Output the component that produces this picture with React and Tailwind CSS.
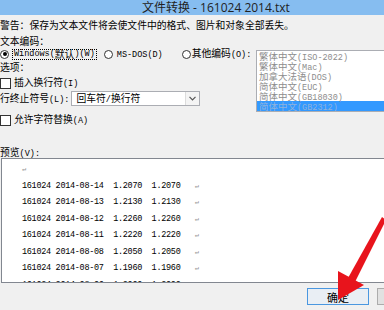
function A({ children }) {
  return <span className="font-['Liberation_Mono',monospace] text-[8.5px]">{children}</span>;
}

function Radio({ on }) {
  return (
    <span className="flex h-[9px] w-[9px] shrink-0 items-center justify-center rounded-full border border-[#333] bg-white">
      {on && <span className="h-[4px] w-[4px] rounded-full bg-black" />}
    </span>
  );
}

function Check() {
  return <span className="h-[11px] w-[11px] shrink-0 border border-[#333] bg-white" />;
}

const encodings = [
  ["繁体中文", "(ISO-2022)"],
  ["繁体中文", "(Mac)"],
  ["加拿大法语", "(DOS)"],
  ["简体中文", "(EUC)"],
  ["简体中文", "(GB18030)"],
  ["简体中文", "(GB2312)"],
];

const rows = [
  ["08-14", "1.2070"],
  ["08-13", "1.2130"],
  ["08-12", "1.2260"],
  ["08-11", "1.2220"],
  ["08-08", "1.2050"],
  ["08-07", "1.1960"],
  ["08-06", "1.2000"],
];

export default function App() {
  return (
    <div className="relative h-[310px] w-[384px] overflow-hidden bg-[#f0f0f0] font-['Noto_Sans_CJK_SC',sans-serif] text-[9.8px] leading-[12px] text-black">
      <div className="flex h-[15px] items-center whitespace-nowrap bg-[#86bdf0] pl-[142px] font-['Open_Sans','Noto_Sans_CJK_SC',sans-serif] text-[12px] text-[#222]">
        文件转换 - 161024 2014.txt
      </div>

      <div className="mt-[4px] h-[12px] whitespace-nowrap">
        警告：保存为文本文件将会使文件中的格式、图片和对象全部丢失。
      </div>
      <div className="mt-[4px] h-[12px]">文本编码：</div>

      <div className="flex">
        <div className="w-[256px] shrink-0">
          <div className="mt-[1px] flex h-[12px] items-center whitespace-nowrap">
            <Radio on />
            <span className="ml-[3px] flex h-[11px] items-center border border-dotted border-black px-[1px]">
              <A>Windows(</A>默认<A>)(W)</A>
            </span>
            <span className="ml-[7px]">
              <Radio />
            </span>
            <span className="ml-[4px]">
              <A>MS-DOS(D)</A>
            </span>
            <span className="ml-[19px]">
              <Radio />
            </span>
            <span className="ml-[1px]">
              其他编码<A>(O):</A>
            </span>
          </div>

          <div className="mt-[1px] h-[12px]">选项：</div>

          <div className="mt-[4px] flex h-[12px] items-center">
            <Check />
            <span className="ml-[3px]">
              插入换行符<A>(I)</A>
            </span>
          </div>

          <div className="mt-[2px] flex h-[15px] items-center whitespace-nowrap">
            <span>
              行终止符号<A>(L):</A>
            </span>
            <div className="ml-[2px] flex h-[15px] w-[129px] items-center border border-[#abadb3] bg-white">
              <span className="flex-1 pl-[4px]">
                回车符<A>/</A>换行符
              </span>
              <span className="flex h-full w-[14px] items-center justify-center border-l border-[#dcdcdc] bg-[#f4f4f4]">
                <svg width="7" height="5" viewBox="0 0 7 5">
                  <path d="M0.5 0.8 L3.5 3.8 L6.5 0.8" fill="none" stroke="#555" strokeWidth="1.2" />
                </svg>
              </span>
            </div>
          </div>

          <div className="mt-[8px] flex h-[12px] items-center">
            <Check />
            <span className="ml-[3px]">
              允许字符替换<A>(A)</A>
            </span>
          </div>
        </div>

        <div className="mt-[3px] h-[62px] w-[140px] shrink-0 overflow-hidden border border-[#abadb3] bg-white text-[9.5px] leading-[10px] text-[#8d8d8d]">
          {encodings.map(([zh, code], i) => (
            <div
              key={i}
              className={
                i === encodings.length - 1
                  ? "h-[10px] whitespace-nowrap bg-[#3399ff] pl-[2px] text-[#8fb2dc]"
                  : "h-[10px] whitespace-nowrap pl-[2px]"
              }
            >
              {zh}
              <A>{code}</A>
            </div>
          ))}
        </div>
      </div>

      <div className="mt-[20px] h-[12px]">
        预览<A>(V):</A>
      </div>

      <div className="ml-[1px] h-[125px] w-[420px] overflow-hidden border border-[#828790] bg-white pl-[20px] pt-[2px] font-['Liberation_Mono',monospace] text-[8.5px] leading-[16.5px] tracking-[-0.3px] whitespace-pre">
        <div className="text-[7px] text-[#999]">↵</div>
        {rows.map(([d, v]) => (
          <div key={d}>
            {`161024 2014-${d}  ${v}  ${v}   `}
            <span className="text-[7px] text-[#999]">↵</span>
          </div>
        ))}
      </div>

      <div className="mt-[5px] flex gap-[8px] pl-[307px]">
        <button className="flex h-[17px] w-[62px] shrink-0 items-center justify-center border border-[#4a97e0] bg-[#e9eef4] text-[11px]">
          确定
        </button>
        <button className="flex h-[17px] w-[62px] shrink-0 items-center justify-center border border-[#acacac] bg-[#e1e1e1] text-[11px]">
          取消
        </button>
      </div>

      <svg className="pointer-events-none absolute left-0 top-0" width="384" height="310" viewBox="0 0 384 310">
        <polygon points="382,217 386,220 355,282 348,278" fill="#e8141c" />
        <polygon points="338,271 364,285 338,300" fill="#e8141c" />
      </svg>
    </div>
  );
}
